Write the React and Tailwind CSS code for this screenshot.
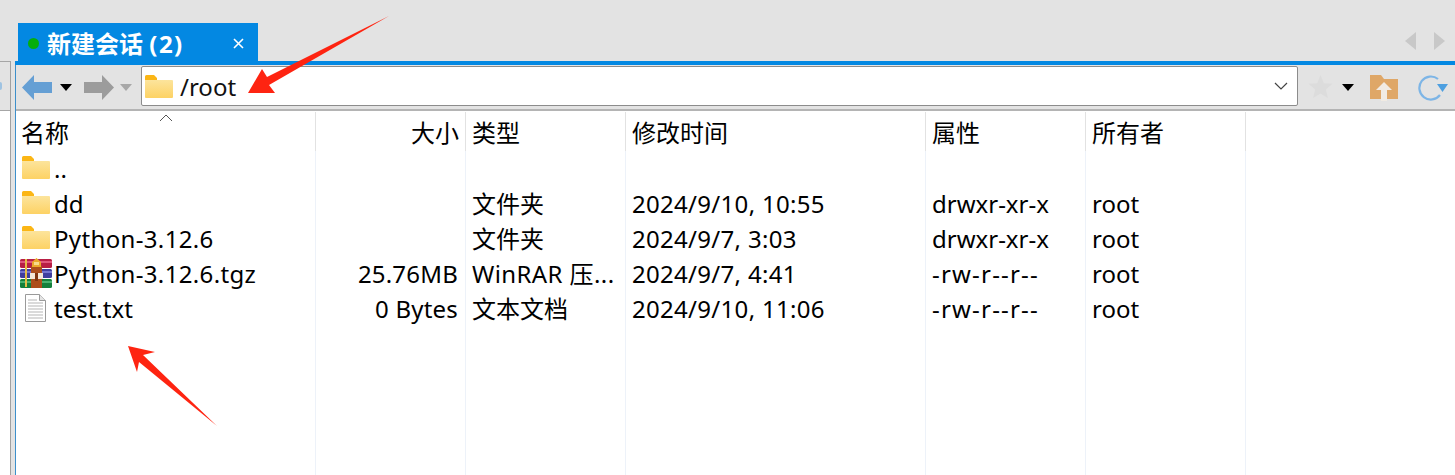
const rows = [
  { icon: "folder", name: "..", size: "", type: "", time: "", attr: "", owner: "" },
  { icon: "folder", name: "dd", size: "", type: "文件夹", time: "2024/9/10, 10:55", attr: "drwxr-xr-x", owner: "root" },
  { icon: "folder", name: "Python-3.12.6", wide: true, size: "", type: "文件夹", time: "2024/9/7, 3:03", attr: "drwxr-xr-x", owner: "root" },
  { icon: "rar", name: "Python-3.12.6.tgz", wide: true, size: "25.76MB", type: "WinRAR 压...", wideType: true, time: "2024/9/7, 4:41", attr: "-rw-r--r--", wideAttr: true, owner: "root" },
  { icon: "txt", name: "test.txt", size: "0 Bytes", type: "文本文档", time: "2024/9/10, 11:06", attr: "-rw-r--r--", wideAttr: true, owner: "root" },
];

function Folder() {
  return (
    <svg width="28" height="23" viewBox="0 0 28 23" className="block">
      <defs>
        <linearGradient id="fg" x1="0" y1="0" x2="0" y2="1">
          <stop offset="0" stopColor="#fce49c" />
          <stop offset="1" stopColor="#fdd264" />
        </linearGradient>
      </defs>
      <path d="M0 1.5A1.5 1.5 0 0 1 1.5 0H9l3 3v2H0z" fill="#fbb616" />
      <path d="M0 5h27a1 1 0 0 1 1 1v16a1 1 0 0 1-1 1H1a1 1 0 0 1-1-1z" fill="url(#fg)" />
    </svg>
  );
}

function RarIcon() {
  return (
    <svg width="32" height="30" viewBox="0 0 32 30" className="block">
      <rect x="0" y="1" width="32" height="9" rx="1.5" fill="#b81f45" />
      <rect x="0" y="11" width="32" height="9" rx="1.5" fill="#3f3e9e" />
      <rect x="0" y="21" width="32" height="9" rx="1.5" fill="#14803c" />
      <rect x="0" y="3" width="32" height="2" fill="#e0577c" />
      <rect x="0" y="13" width="32" height="2" fill="#7474cf" />
      <rect x="0" y="23" width="32" height="2" fill="#48b36f" />
      <rect x="5" y="1" width="2" height="28" fill="#e6bd45" />
      <rect x="11" y="8" width="11" height="22" fill="#ad4f1b" />
      <path d="M12 9V4l4.500-4 4.500 4v5z" fill="#eaa92c" />
      <rect x="14" y="4" width="5" height="3" fill="#f7dc8c" />
      <rect x="10" y="15" width="13" height="6" fill="#f4e8d6" />
      <rect x="15" y="15" width="3" height="8" fill="#7e3610" />
    </svg>
  );
}

function TxtIcon() {
  return (
    <svg width="21" height="28" viewBox="0 0 21 28" className="block">
      <path d="M.5.5h14l6 6v21H.5z" fill="#fff" stroke="#9a9a9a" />
      <path d="M14.500.5v6h6" fill="#e4e4e4" stroke="#9a9a9a" />
      <path d="M3 6h9M3 9h15M3 12h15M3 15h15M3 18h15M3 21h15M3 24h15" stroke="#b5b5b5" strokeWidth="1" />
    </svg>
  );
}

function RowIcon({ icon }) {
  if (icon === "folder") return <span className="absolute left-[6px] top-[5px]"><Folder /></span>;
  if (icon === "rar") return <span className="absolute left-[4px] top-[2px]"><RarIcon /></span>;
  return <span className="absolute left-[9px] top-[3px]"><TxtIcon /></span>;
}

function Caret({ color }) {
  return (
    <svg width="12" height="7" viewBox="0 0 12 7" className="block"><path d="M0 0h12L6 7z" fill={color} /></svg>
  );
}

function Arrow({ flip, color }) {
  return (
    <svg width="30" height="25" viewBox="0 0 30 25" className={flip ? "block -scale-x-100" : "block"}>
      <path d="M0 12.500 12 0v7h18v11H12v7z" fill={color} />
    </svg>
  );
}

function Column({ width, title, headClass = "pl-[6px]", bodyClass, extra, children }) {
  return (
    <div className={`${width} relative flex shrink-0 flex-col`}>
      {extra}
      <div className={`flex h-[39px] shrink-0 items-center border-r border-[#e2e2e2] pt-[1px] ${headClass}`}>{title}</div>
      <div className={`flex-1 whitespace-nowrap border-r border-[#edf2f9] ${bodyClass}`}>{children}</div>
    </div>
  );
}

export default function App() {
  return (
    <div className="relative h-[475px] w-[1455px] overflow-hidden bg-white text-[24px] leading-[35px] text-black [font-family:'Noto_Sans','Noto_Sans_CJK_SC',sans-serif]">
      {/* tab strip */}
      <div className="flex h-[61px] items-end justify-between bg-[#e3e3e3] pl-[18px] pr-[10px]">
        <div className="flex h-[38px] w-[240px] items-center bg-[#0388e2] pl-[10px] pr-[14px] pt-[2px] font-bold text-white">
          <span className="h-[11px] w-[11px] rounded-full bg-[#05ae0c]" />
          <span className="ml-[8px] flex-1 whitespace-nowrap">新建会话 <span className="tracking-[1.5px]">(2)</span></span>
          <svg width="11" height="11" viewBox="0 0 11 11"><path d="M1 1l9 9M10 1l-9 9" stroke="#fff" strokeWidth="1.6" /></svg>
        </div>
        <div className="mb-[11px] flex items-center gap-[18px]">
          <svg width="11" height="18" viewBox="0 0 11 18"><path d="M11 0v18L0 9z" fill="#c8c8c8" /></svg>
          <svg width="11" height="18" viewBox="0 0 11 18"><path d="M0 0v18L11 9z" fill="#c8c8c8" /></svg>
        </div>
      </div>

      <div className="flex h-[414px]">
        {/* left neighbour pane */}
        <div className="w-[10px] shrink-0">
          <div className="flex h-[50px] items-center border-y border-[#a6a6a6] bg-[#e3e3e3]">
            <span className="h-[8px] w-[2px] rounded-r-full bg-[#9fc3e2]" />
          </div>
        </div>
        <div className="w-[5px] shrink-0 border-l border-[#a0a0a0] bg-[#e3e3e3]" />

        <div className="min-w-0 flex-1 border-l border-[#3d8fca]">
          {/* toolbar */}
          <div className="-ml-px h-[4px] bg-[#0388e2]" />
          <div className="flex h-[46px] items-center border-b-2 border-[#b4b4b4] bg-[#e3e3e3] pl-[6px]">
            <Arrow color="#659fd4" />
            <span className="ml-[8px]"><Caret color="#000" /></span>
            <span className="ml-[12px]"><Arrow flip color="#9c9c9c" /></span>
            <span className="ml-[6px]"><Caret color="#a8a8a8" /></span>
            <div className="-mt-[2px] ml-[9px] flex h-[40px] w-[1157px] items-center rounded-[2px] border border-[#8c8c8c] bg-white pl-[3px] pr-[9px]">
              <Folder />
              <span className="ml-[7px] flex-1 text-[#111]">/root</span>
              <svg width="14" height="8" viewBox="0 0 14 8"><path d="M1 1l6 6 6-6" fill="none" stroke="#444" strokeWidth="1.2" /></svg>
            </div>
            <svg className="ml-[10px]" width="25" height="24" viewBox="0 0 27 26"><path d="M13.500 0l3.600 8.900 9.400.7-7.200 6 2.300 9.400-8.100-5-8.100 5 2.300-9.400L.5 9.600l9.400-.7z" fill="#dcdcdc" /></svg>
            <span className="ml-[9px]"><Caret color="#000" /></span>
            <svg className="ml-[16px]" width="28" height="27" viewBox="0 0 28 27">
              <path d="M0 1h11l3 4h14v20H0z" fill="#dfa767" />
              <path d="M14 8 22 16h-5v11h-6V16H6z" fill="#f1ebe3" />
            </svg>
            <svg className="ml-[19px]" width="31" height="28" viewBox="0 0 31 28">
              <path d="M21 6A11.500 11.500 0 1 0 23 22" fill="none" stroke="#7db5e6" strokeWidth="2.2" />
              <path d="M20 11h11l-5.500 8z" fill="#4d9fe0" />
            </svg>
          </div>

          {/* list */}
          <div className="flex h-[364px] pt-px">
            <Column
              width="w-[300px]"
              title="名称"
              headClass="pl-[5px]"
              extra={<svg className="absolute left-[143px] top-[2px]" width="14" height="8" viewBox="0 0 14 8"><path d="M1 7l6-6 6 6" fill="none" stroke="#555" strokeWidth="1" /></svg>}
            >
              {rows.map((r) => (
                <div key={r.name} className={`relative h-[35px] pl-[38px] ${r.wide ? "tracking-[0.35px]" : ""}`}>
                  <RowIcon icon={r.icon} />
                  {r.name}
                </div>
              ))}
            </Column>
            <Column width="w-[150px]" title="大小" headClass="justify-end pr-[6px]" bodyClass="text-right">
              {rows.map((r) => <div key={r.name} className="h-[35px] pr-[7px] tracking-[0.2px]">{r.size}</div>)}
            </Column>
            <Column width="w-[160px]" title="类型">
              {rows.map((r) => <div key={r.name} className={`h-[35px] pl-[6px] ${r.wideType ? "tracking-[0.4px]" : ""}`}>{r.type}</div>)}
            </Column>
            <Column width="w-[300px]" title="修改时间">
              {rows.map((r) => <div key={r.name} className="h-[35px] pl-[6px] tracking-[0.3px]">{r.time}</div>)}
            </Column>
            <Column width="w-[160px]" title="属性">
              {rows.map((r) => <div key={r.name} className={`h-[35px] pl-[6px] ${r.wideAttr ? "tracking-[1.2px]" : ""}`}>{r.attr}</div>)}
            </Column>
            <Column width="w-[160px]" title="所有者">
              {rows.map((r) => <div key={r.name} className="h-[35px] pl-[6px]">{r.owner}</div>)}
            </Column>
          </div>
        </div>
      </div>

      {/* annotation arrows */}
      <svg className="pointer-events-none absolute left-0 top-0" width="1455" height="475" viewBox="0 0 1455 475">
        <path d="M389 16 267 77 262 69 248 93 275 93 269 85z" fill="#fe2411" />
        <path d="M128 346 155 352 143 355 217 426 139 362 137 372z" fill="#fe2411" />
      </svg>
    </div>
  );
}
